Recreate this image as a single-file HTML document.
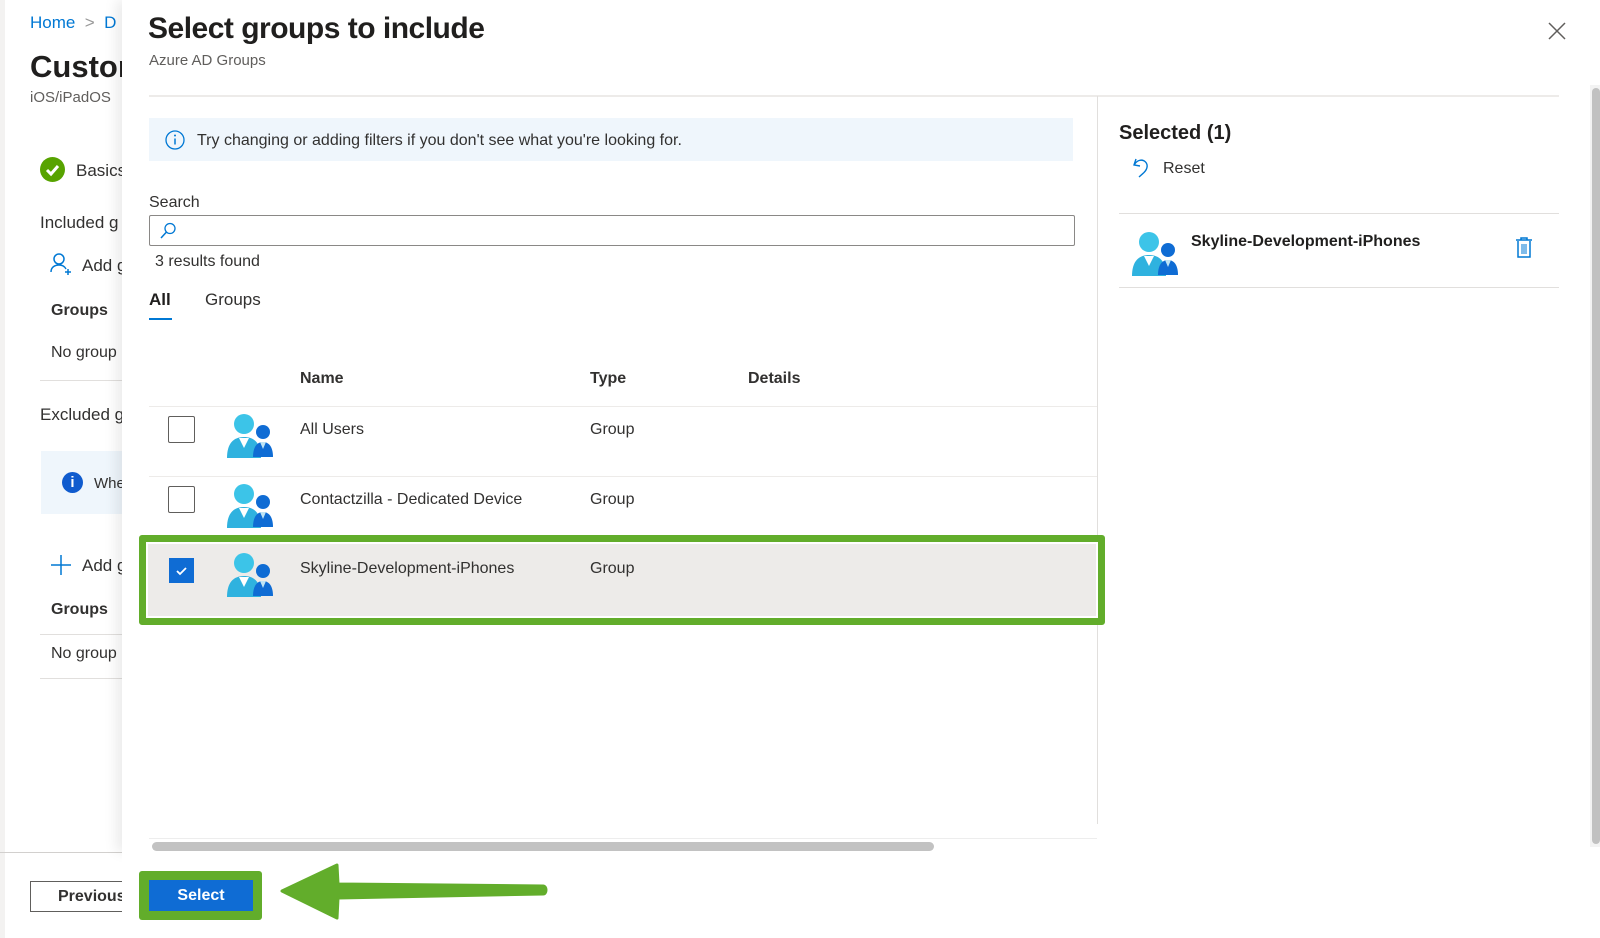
<!DOCTYPE html>
<html><head><meta charset="utf-8"><style>
*{margin:0;padding:0;box-sizing:border-box}
body{width:1600px;height:938px;position:relative;overflow:hidden;background:#fff;font-family:"Liberation Sans",sans-serif;color:#323130}
.a{position:absolute;white-space:nowrap}
.hr{position:absolute;height:1px;background:#e1dfdd}
</style></head><body>
<!-- left page -->
<div class="a" style="left:0;top:0;width:5px;height:938px;background:#f3f2f1"></div>
<div class="a" style="left:30px;top:13px;color:#0078d4;font-size:17px">Home &nbsp;<span style="color:#999">&gt;</span>&nbsp; D</div>
<div class="a" style="left:30px;top:49px;font-size:31px;font-weight:bold;color:#201f1e">Custom</div>
<div class="a" style="left:30px;top:89px;font-size:15px;color:#605e5c">iOS/iPadOS</div>
<div class="a" style="left:40px;top:157px;width:25px;height:25px;border-radius:50%;background:#57a300"><svg width="25" height="25"><path d="M7 13l4 4 7-8" stroke="#fff" stroke-width="3" fill="none"/></svg></div>
<div class="a" style="left:76px;top:161px;font-size:17px">Basics</div>
<div class="a" style="left:40px;top:213px;font-size:17px">Included g</div>
<svg class="a" style="left:49px;top:252px" width="24" height="24"><circle cx="10" cy="7" r="5" stroke="#0078d4" stroke-width="1.5" fill="none"/><path d="M2 20c0-5 4-7 8-7s6 2 7 4" stroke="#0078d4" stroke-width="1.5" fill="none"/><path d="M19 17v6M16 20h6" stroke="#0078d4" stroke-width="1.5"/></svg>
<div class="a" style="left:82px;top:256px;font-size:17px">Add g</div>
<div class="a" style="left:51px;top:302px;font-size:16px;font-weight:bold">Groups</div>
<div class="a" style="left:51px;top:344px;font-size:16px">No group</div>
<div class="hr" style="left:40px;top:380px;width:82px"></div>
<div class="a" style="left:40px;top:405px;font-size:17px">Excluded g</div>
<div class="a" style="left:41px;top:451px;width:81px;height:63px;background:#eff6fc"></div>
<div class="a" style="left:62px;top:472px;width:21px;height:21px;border-radius:50%;background:#0f5bce;color:#fff;font-weight:bold;font-size:15px;text-align:center;line-height:21px">i</div>
<div class="a" style="left:94px;top:475px;font-size:15px">When</div>
<svg class="a" style="left:50px;top:554px" width="22" height="22"><path d="M11 1v20M1 11h20" stroke="#0078d4" stroke-width="1.5"/></svg>
<div class="a" style="left:82px;top:556px;font-size:17px">Add g</div>
<div class="a" style="left:51px;top:601px;font-size:16px;font-weight:bold">Groups</div>
<div class="hr" style="left:40px;top:634px;width:82px"></div>
<div class="a" style="left:51px;top:645px;font-size:16px">No group</div>
<div class="hr" style="left:40px;top:678px;width:82px"></div>
<div class="hr" style="left:0;top:852px;width:1600px;background:#d2d0ce"></div>
<div class="a" style="left:30px;top:881px;width:100px;height:31px;border:1px solid #605e5c;font-size:16px;font-weight:bold;line-height:29px;padding-left:27px">Previous</div>

<!-- panel -->
<div class="a" style="left:122px;top:0;width:1478px;height:852px;background:#fff;box-shadow:-6px 0 12px rgba(0,0,0,0.08)"></div>
<div class="a" style="left:122px;top:852px;width:1478px;height:86px;background:#fff"></div>
<div class="a" style="left:148px;top:12px;font-size:30px;font-weight:bold;color:#201f1e;letter-spacing:-0.5px">Select groups to include</div>
<div class="a" style="left:149px;top:52px;font-size:15px;color:#605e5c">Azure AD Groups</div>
<svg class="a" style="left:1547px;top:21px" width="20" height="20"><path d="M2 2l16 16M18 2L2 18" stroke="#605e5c" stroke-width="1.5"/></svg>
<div class="hr" style="left:149px;top:95px;width:1410px;height:2px;background:#edebe9"></div>
<div class="a" style="left:149px;top:118px;width:924px;height:43px;background:#eff6fc"></div>
<svg class="a" style="left:164px;top:129px" width="22" height="22"><circle cx="11" cy="11" r="9" stroke="#0078d4" stroke-width="1.3" fill="none"/><path d="M11 9.5v6" stroke="#0078d4" stroke-width="1.5"/><circle cx="11" cy="6.5" r="1" fill="#0078d4"/></svg>
<div class="a" style="left:197px;top:132px;font-size:16px">Try changing or adding filters if you don't see what you're looking for.</div>
<div class="a" style="left:149px;top:194px;font-size:16px">Search</div>
<div class="a" style="left:149px;top:215px;width:926px;height:31px;border:1px solid #8a8886;border-radius:2px"></div>
<svg class="a" style="left:158px;top:221px" width="20" height="20"><circle cx="12" cy="7.5" r="5" stroke="#0078d4" stroke-width="1.3" fill="none"/><path d="M8.5 11L3 17" stroke="#0078d4" stroke-width="1.5"/></svg>
<div class="a" style="left:155px;top:253px;font-size:16px">3 results found</div>
<div class="a" style="left:149px;top:290px;font-size:17px;font-weight:bold;color:#201f1e">All</div>
<div class="a" style="left:149px;top:318px;width:23px;height:2px;background:#0078d4"></div>
<div class="a" style="left:205px;top:290px;font-size:17px">Groups</div>
<div class="a" style="left:300px;top:370px;font-size:16px;font-weight:bold">Name</div>
<div class="a" style="left:590px;top:370px;font-size:16px;font-weight:bold">Type</div>
<div class="a" style="left:748px;top:370px;font-size:16px;font-weight:bold">Details</div>
<div class="hr" style="left:149px;top:406px;width:948px;background:#edebe9"></div>
<div class="hr" style="left:149px;top:476px;width:948px;background:#edebe9"></div>
<div class="a" style="left:1097px;top:96px;width:1px;height:728px;background:#e1dfdd"></div>

<!-- highlight row -->
<div class="a" style="left:139px;top:535px;width:966px;height:90px;border:7px solid #62ad2b;border-radius:3px;background:#edebe9;box-shadow:inset 0 0 0 2px #fff"></div>

<!-- rows -->
<div class="a" style="left:168px;top:416px;width:27px;height:27px;border:1.5px solid #605e5c;border-radius:2px;background:#fff"></div>
<div class="a" style="left:168px;top:486px;width:27px;height:27px;border:1.5px solid #605e5c;border-radius:2px;background:#fff"></div>
<div class="a" style="left:169px;top:558px;width:25px;height:25px;background:#0f6cd4"><svg width="25" height="25"><path d="M8 13l3 3 6-6" stroke="#fff" stroke-width="1.8" fill="none"/></svg></div>

<svg width="0" height="0" style="position:absolute"><defs><g id="ppl"><circle cx="18" cy="13" r="10" fill="#3cc4e8"/><path d="M1 47c0-14 6-21 17-21s17 7 17 21z" fill="#2fb2df"/><path d="M13 27l5 10 5-10z" fill="#fff"/><circle cx="37" cy="21" r="7" fill="#0f6cd4"/><path d="M27 46c0-10 4-15 10-15s10 5 10 15z" fill="#0f6cd4"/><path d="M34 31l3 7 3-7z" fill="#bfe4f5"/></g></defs></svg>
<svg class="a" style="left:226px;top:411px" width="48" height="48"><use href="#ppl"/></svg>
<svg class="a" style="left:226px;top:481px" width="48" height="48"><use href="#ppl"/></svg>
<svg class="a" style="left:226px;top:550px" width="48" height="48"><use href="#ppl"/></svg>
<div class="a" style="left:300px;top:421px;font-size:16px">All Users</div>
<div class="a" style="left:590px;top:421px;font-size:16px">Group</div>
<div class="a" style="left:300px;top:491px;font-size:16px">Contactzilla - Dedicated Device</div>
<div class="a" style="left:590px;top:491px;font-size:16px">Group</div>
<div class="a" style="left:300px;top:560px;font-size:16px">Skyline-Development-iPhones</div>
<div class="a" style="left:590px;top:560px;font-size:16px">Group</div>

<!-- right side -->
<div class="a" style="left:1119px;top:122px;font-size:20px;font-weight:bold;color:#201f1e">Selected (1)</div>
<svg class="a" style="left:1131px;top:156px" width="22" height="24"><path d="M5 3L3 9l6 1" stroke="#0078d4" stroke-width="1.4" fill="none"/><path d="M3.5 8.5C6 4 11 3 14 5.5c3 2.5 3 7-1 11L8 21" stroke="#0078d4" stroke-width="1.4" fill="none"/></svg>
<div class="a" style="left:1163px;top:160px;font-size:16px">Reset</div>
<div class="hr" style="left:1119px;top:213px;width:440px"></div>
<svg class="a" style="left:1131px;top:229px" width="48" height="48"><use href="#ppl"/></svg>
<div class="a" style="left:1191px;top:233px;font-size:16px;font-weight:bold;color:#201f1e">Skyline-Development-iPhones</div>
<svg class="a" style="left:1514px;top:236px" width="20" height="24"><path d="M2 4h16M7 4V2h6v2" stroke="#0078d4" stroke-width="1.5" fill="none"/><path d="M4 5v16h12V5" stroke="#0078d4" stroke-width="1.5" fill="none"/><path d="M8 8v10M10 8v10M12 8v10" stroke="#0078d4" stroke-width="1"/></svg>
<div class="hr" style="left:1119px;top:287px;width:440px"></div>

<!-- scrollbars -->
<div class="a" style="left:1590px;top:85px;width:10px;height:762px;background:#f3f3f3"></div>
<div class="a" style="left:1592px;top:88px;width:8px;height:756px;border-radius:4px;background:#c1c1c1"></div>
<div class="hr" style="left:149px;top:838px;width:948px;background:#ededed"></div>
<div class="a" style="left:152px;top:842px;width:782px;height:9px;border-radius:5px;background:#c2c2c2"></div>

<!-- select button -->
<div class="a" style="left:139px;top:871px;width:123px;height:49px;background:#62ad2b;border-radius:3px"></div>
<div class="a" style="left:149px;top:880px;width:104px;height:31px;background:#0f6cd4;color:#fff;font-size:16px;font-weight:bold;text-align:center;line-height:31px">Select</div>
<svg class="a" style="left:275px;top:858px" width="275" height="66"><path d="M7 33L62 7l1 19 205 2c4 0 4 8 0 8L63 40l-1 20z" fill="#62ad2b" stroke="#62ad2b" stroke-width="3" stroke-linejoin="round"/></svg>
</body></html>
